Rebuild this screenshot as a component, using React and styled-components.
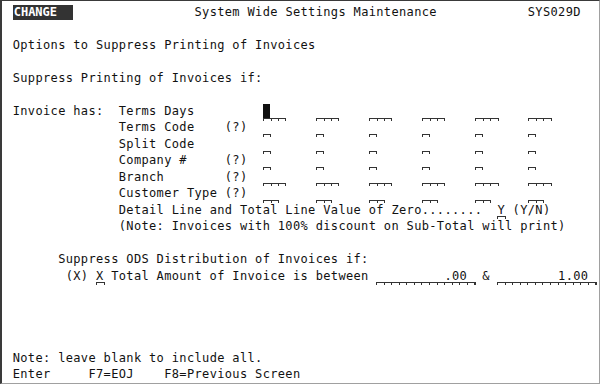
import React from 'react';
import styled, { createGlobalStyle } from 'styled-components';

const CELL = 7.575;
const ROW = 16.46;

const GlobalStyle = createGlobalStyle`
  html, body { margin: 0; padding: 0; background: #fff; }
`;

const Screen = styled.div`
  box-sizing: border-box;
  width: 600px;
  height: 384px;
  overflow: hidden;
  background: #fff;
  border-top: 1px solid #3a3a3a;
  border-left: 2px solid #3a3a3a;
  border-right: 1px solid #a0a0a0;
  border-bottom: 1px solid #a0a0a0;
  padding: 3.3px 0 0 10.7px;
  font-family: "DejaVu Sans Mono", monospace;
  font-size: 12px;
  letter-spacing: 0.35px;
  color: #111;
`;

const Row = styled.div`
  height: ${ROW}px;
  line-height: ${ROW}px;
  white-space: pre;
`;

const Mode = styled.span`
  display: inline-block;
  vertical-align: top;
  box-sizing: border-box;
  width: ${8 * CELL}px;
  height: 15px;
  margin-top: 0.7px;
  padding-left: 1px;
  line-height: 15px;
  background: #333;
  color: #fff;
  font-weight: bold;
  letter-spacing: 0;
`;

const Field = styled.span`
  position: relative;
  display: inline-block;
  vertical-align: top;
  width: ${(p) => p.$size * CELL}px;
  height: ${ROW}px;
  white-space: pre;
  &::after {
    content: '';
    position: absolute;
    left: 0;
    top: 14.6px;
    width: ${(p) => p.$size * CELL}px;
    height: 2px;
    border-top: 1px solid #333;
    border-right: 1px solid #333;
    background: repeating-linear-gradient(to right, #333 0 1px, transparent 1px ${CELL}px);
  }
  ${(p) =>
    p.$cursor &&
    `
    &::before {
      content: '';
      position: absolute;
      left: 0;
      top: 1px;
      width: 7px;
      height: 14px;
      background: #111;
    }
  `}
`;

const fieldRows = [
  { label: 'Invoice has:  Terms Days', size: 3, cursor: true },
  { label: '              Terms Code    (?)', size: 1 },
  { label: '              Split Code', size: 1 },
  { label: '              Company #     (?)', size: 1 },
  { label: '              Branch        (?)', size: 3 },
  { label: '              Customer Type (?)', size: 2 },
];

const sp = (n) => ' '.repeat(n);

function FieldRow({ label, size, cursor }) {
  const items = [];
  for (let i = 0; i < 6; i++) {
    if (i > 0) items.push(sp(7 - size));
    items.push(<Field key={i} $size={size} $cursor={cursor && i === 0} />);
  }
  return (
    <Row>
      {label.padEnd(33)}
      {items}
    </Row>
  );
}

export default function App() {
  return (
    <>
      <GlobalStyle />
      <Screen>
        <Row>
          <Mode>CHANGE</Mode>
          {sp(16)}System Wide Settings Maintenance{sp(12)}SYS029D
        </Row>
        <Row />
        <Row>Options to Suppress Printing of Invoices</Row>
        <Row />
        <Row>Suppress Printing of Invoices if:</Row>
        <Row />
        {fieldRows.map((r) => (
          <FieldRow key={r.label} {...r} />
        ))}
        <Row>
          {sp(14) + 'Detail Line and Total Line Value of Zero........  '}
          <Field $size={1}>Y</Field>
          {' (Y/N)'}
        </Row>
        <Row>{sp(14) + '(Note: Invoices with 100% discount on Sub-Total will print)'}</Row>
        <Row />
        <Row>{sp(6) + 'Suppress ODS Distribution of Invoices if:'}</Row>
        <Row>
          {sp(7) + '(X) '}
          <Field $size={1}>X</Field>
          {' Total Amount of Invoice is between '}
          <Field $size={13}>{'         .00 '}</Field>
          {' & '}
          <Field $size={13}>{'        1.00 '}</Field>
        </Row>
        <Row />
        <Row />
        <Row />
        <Row />
        <Row>Note: leave blank to include all.</Row>
        <Row>Enter     F7=EOJ    F8=Previous Screen</Row>
      </Screen>
    </>
  );
}
